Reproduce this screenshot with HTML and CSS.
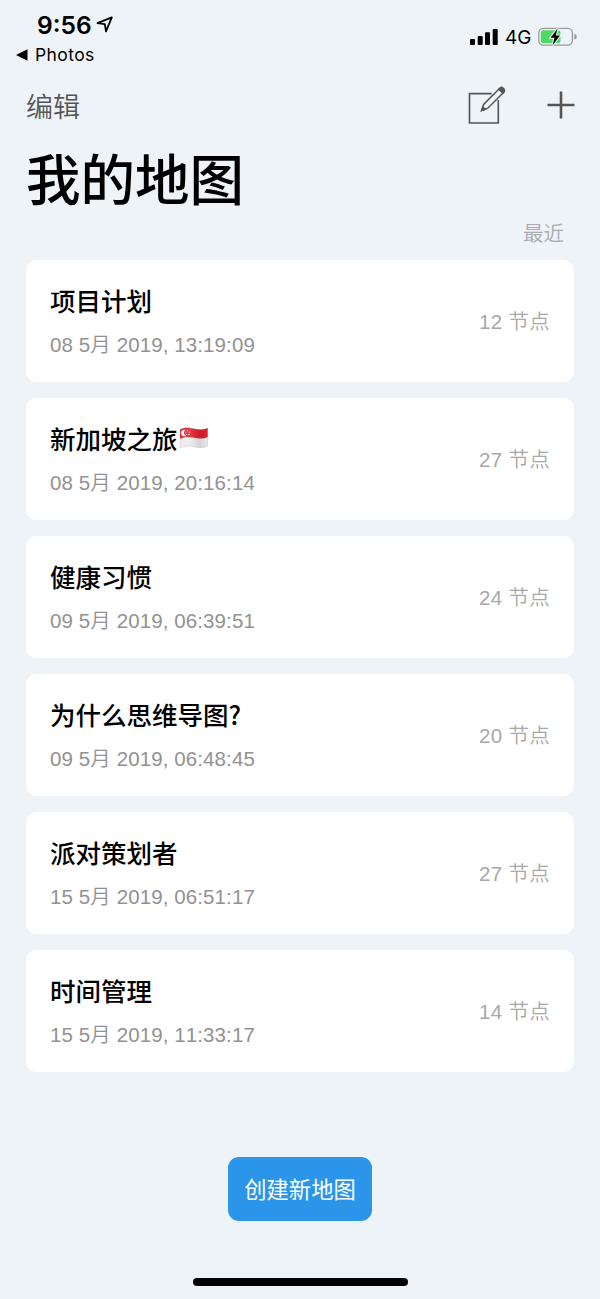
FILE: index.html
```
<!DOCTYPE html>
<html lang="zh-CN">
<head>
  <meta charset="UTF-8">
  <meta name="viewport" content="width=device-width, initial-scale=1.0">
  <title>我的地图</title>
  <link rel="stylesheet" href="styles.css">
</head>
<body>
  <div class="screen">
    <!-- Status bar -->
    <header class="status-bar">
      <div class="status-left">
        <div class="clock">
          <span>9:56</span>
          <svg class="location-icon" width="18" height="18" viewBox="0 0 18 18">
            <path d="M1.5 7.2 L15.8 1.4 L10 15.4 L8.8 8.2 Z" fill="none" stroke="#000" stroke-width="1.8" stroke-linejoin="round"/>
          </svg>
        </div>
        <div class="back-link">
          <svg width="12" height="12" viewBox="0 0 12 12"><path d="M0 6 L11.5 0.3 V11.7 Z"/></svg>
          <span>Photos</span>
        </div>
      </div>
      <div class="status-right">
        <svg width="28" height="18" viewBox="0 0 28 18">
          <rect x="0" y="11" width="5" height="6" rx="1"/>
          <rect x="7.7" y="8" width="5" height="9" rx="1"/>
          <rect x="15" y="4.3" width="5" height="12.7" rx="1"/>
          <rect x="22.7" y="1" width="5" height="16" rx="1"/>
        </svg>
        <span class="network">4G</span>
        <svg class="battery" width="40" height="20" viewBox="0 0 40 20">
          <rect x="0.8" y="1.3" width="33.6" height="16.8" rx="4.6" fill="none" stroke="#999b9d" stroke-width="1.3"/>
          <path d="M36.3 6.8 Q38.8 7.4 38.8 9.7 Q38.8 12 36.3 12.6 Z" fill="#999b9d"/>
          <rect x="2.8" y="3.3" width="19.7" height="12.8" rx="2.6" fill="#4cd964"/>
          <path d="M19.5 1.5 L12.6 10.7 H16.5 L14.6 18.2 L22 8.5 H17.8 Z" stroke="#eef3f7" stroke-width="2.2" paint-order="stroke"/>
        </svg>
      </div>
    </header>

    <!-- Toolbar -->
    <nav class="toolbar">
      <span class="edit">编辑</span>
      <div class="actions">
        <svg width="38" height="38" viewBox="0 0 38 38" fill="none" stroke="#555" stroke-width="1.6">
          <path d="M23.7 7.6 H1.5 V37 H30.3 V14"/>
          <path d="M13.7 24.4 L15.8 18.2 L31 3 L35 7 L19.8 22.2 Z" stroke-width="1.5"/>
          <path d="M13.7 24.4 L14.8 21 L17.1 23.3 Z" fill="#555"/>
          <path d="M31 3 L32.4 1.7 Q33.7 0.9 35.5 2.5 Q37 4.2 36.2 5.8 L35 7 Z" fill="#555"/>
        </svg>
        <svg width="28" height="28" viewBox="0 0 28 28" stroke="#555" stroke-width="2.6">
          <path d="M0.5 14 H27.5 M14 0.5 V27.5"/>
        </svg>
      </div>
    </nav>

    <h1 class="heading">我的地图</h1>
    <div class="sort">最近</div>

    <!-- Maps -->
    <main class="map-list">
      <div class="map-card">
        <div>
          <h2 class="map-title">项目计划</h2>
          <div class="map-date">08 5月 2019, 13:19:09</div>
        </div>
        <span class="map-nodes">12 节点</span>
      </div>
      <div class="map-card">
        <div>
          <h2 class="map-title">新加坡之旅<svg class="flag" width="30" height="22" viewBox="0 0 30 22">
            <defs>
              <linearGradient id="wave" x1="0" x2="1" y1="0" y2="0">
                <stop offset="0" stop-color="#fff" stop-opacity="0.05"/>
                <stop offset="0.35" stop-color="#fff" stop-opacity="0.12"/>
                <stop offset="0.7" stop-color="#000" stop-opacity="0.1"/>
                <stop offset="1" stop-color="#000" stop-opacity="0.02"/>
              </linearGradient>
            </defs>
            <path d="M1 2.5 C6 -0.5 11 0.8 15 1.8 C20 3 24 2.8 28.7 1 V19 C24 21.5 20 20.8 15 19.7 C10 18.6 6 18.7 1 21 Z" fill="#ececec"/>
            <path d="M1 2.5 C6 -0.5 11 0.8 15 1.8 C20 3 24 2.8 28.7 1 V10 C24 12 20 11.7 15 10.7 C10 9.7 6 9.8 1 11.8 Z" fill="#e3202f"/>
            <path d="M6.3 2.8 A3.3 3.3 0 1 0 7.1 8.8 A3.5 3.5 0 0 1 6.3 2.8 Z" fill="#fff"/>
            <g fill="#fff">
              <circle cx="8.5" cy="3.5" r="0.6"/>
              <circle cx="10.4" cy="5" r="0.6"/>
              <circle cx="9.8" cy="7.4" r="0.6"/>
              <circle cx="7.5" cy="7.4" r="0.6"/>
              <circle cx="6.9" cy="5" r="0.6"/>
            </g>
            <path d="M1 2.5 C6 -0.5 11 0.8 15 1.8 C20 3 24 2.8 28.7 1 V19 C24 21.5 20 20.8 15 19.7 C10 18.6 6 18.7 1 21 Z" fill="url(#wave)" stroke="#777" stroke-opacity="0.35" stroke-width="0.5"/>
          </svg></h2>
          <div class="map-date">08 5月 2019, 20:16:14</div>
        </div>
        <span class="map-nodes">27 节点</span>
      </div>
      <div class="map-card">
        <div>
          <h2 class="map-title">健康习惯</h2>
          <div class="map-date">09 5月 2019, 06:39:51</div>
        </div>
        <span class="map-nodes">24 节点</span>
      </div>
      <div class="map-card">
        <div>
          <h2 class="map-title">为什么思维导图?</h2>
          <div class="map-date">09 5月 2019, 06:48:45</div>
        </div>
        <span class="map-nodes">20 节点</span>
      </div>
      <div class="map-card">
        <div>
          <h2 class="map-title">派对策划者</h2>
          <div class="map-date">15 5月 2019, 06:51:17</div>
        </div>
        <span class="map-nodes">27 节点</span>
      </div>
      <div class="map-card">
        <div>
          <h2 class="map-title">时间管理</h2>
          <div class="map-date">15 5月 2019, 11:33:17</div>
        </div>
        <span class="map-nodes">14 节点</span>
      </div>
    </main>

    <button class="create-btn">创建新地图</button>
    <div class="home-indicator"></div>
  </div>
</body>
</html>
```
FILE: styles.css
```
* {
  box-sizing: border-box;
}

body {
  margin: 0;
  background-color: #eef3f7;
  color: #000;
  font-family: "Liberation Sans", "Noto Sans CJK SC", sans-serif;
}

.screen {
  display: flex;
  flex-direction: column;
  width: 600px;
  height: 1299px;
  overflow: hidden;
}

.status-bar {
  display: flex;
  justify-content: space-between;
  height: 76px;
  padding: 10px 22px 0 16px;
  font-family: Inter, sans-serif;
}

.clock {
  display: flex;
  align-items: center;
  gap: 4px;
  height: 30px;
  padding-left: 21px;
  font-size: 24.5px;
  font-weight: 600;
}

.back-link {
  display: flex;
  align-items: center;
  gap: 7px;
  height: 29px;
  font-size: 17.5px;
  letter-spacing: 0.4px;
}

.status-right {
  display: flex;
  align-items: center;
  height: 34px;
  margin-top: 10px;
}

.network {
  margin-left: 7px;
  width: 33px;
  padding-top: 1px;
  font-size: 19px;
}

.toolbar {
  display: flex;
  justify-content: space-between;
  align-items: center;
  height: 58px;
  padding: 0 25.5px 0 26px;
}

.edit {
  color: #555;
  font-size: 27px;
  font-weight: 350;
  font-family: "Noto Sans CJK SC", sans-serif;
}

.actions {
  display: flex;
  align-items: center;
  gap: 40.5px;
}

.heading {
  height: 86px;
  margin: 0;
  padding-left: 26px;
  font-family: "Noto Sans CJK SC", sans-serif;
  font-size: 54.5px;
  font-weight: 500;
  line-height: 86px;
}

.sort {
  height: 39.5px;
  padding-right: 36px;
  color: #a9abad;
  font-size: 20.5px;
  font-weight: 350;
  line-height: 28px;
  text-align: right;
}

.map-list {
  display: flex;
  flex-direction: column;
  gap: 16px;
  padding: 0 26px;
}

.map-card {
  display: flex;
  justify-content: space-between;
  align-items: center;
  height: 122px;
  padding: 0 24px;
  background-color: #fff;
  border-radius: 10px;
}

.map-title {
  display: flex;
  align-items: center;
  height: 44px;
  margin: 0;
  padding-top: 3px;
  font-family: "Noto Sans CJK SC", sans-serif;
  font-size: 25.5px;
  font-weight: 500;
  line-height: 44px;
}

.flag {
  margin-left: 1.5px;
}

.map-date {
  height: 44px;
  color: #929292;
  font-size: 20.5px;
  font-kerning: none;
  font-weight: 350;
  letter-spacing: 0.1px;
  line-height: 48px;
}

.map-nodes {
  padding-bottom: 2px;
  color: #a8a8a8;
  font-size: 20.5px;
  font-weight: 350;
  letter-spacing: 0.3px;
}

.create-btn {
  align-self: center;
  width: 144px;
  height: 64px;
  margin-top: 85px;
  padding: 0 0 2px;
  border: none;
  border-radius: 11px;
  background-color: #2a95e9;
  color: #fff;
  font-family: "Noto Sans CJK SC", sans-serif;
  font-size: 22.3px;
}

.home-indicator {
  align-self: center;
  width: 215px;
  height: 8px;
  margin-top: 57px;
  border-radius: 4px;
  background-color: #000;
}
```
